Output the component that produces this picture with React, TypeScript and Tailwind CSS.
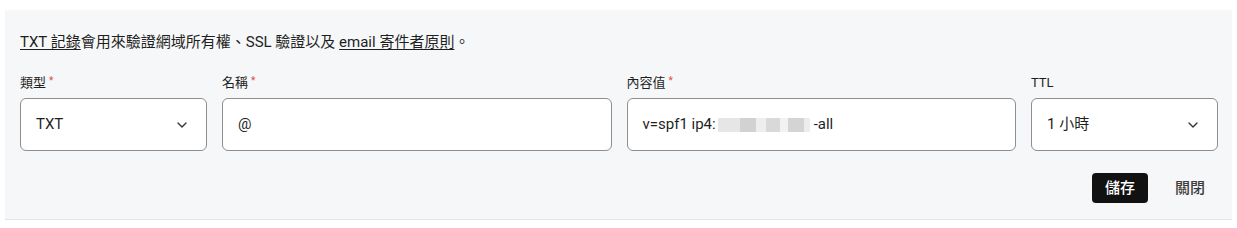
import { ChevronDown } from "lucide-react"

const font = { fontFamily: 'Roboto, "Noto Sans CJK TC", sans-serif' }

const Label = ({ text, required }: { text: string; required?: boolean }) => (
    <div className="h-[16px] mb-[8px] flex items-center text-[13px] text-[#1f1f1f] leading-none">
        {text}
        {required && <span className="ml-[3px] text-[#e0483e] text-[10px] -mt-[3px]">*</span>}
    </div>
)

const SelectBox = ({ value }: { value: string }) => (
    <div className="h-[53px] rounded-[6px] border border-[#8e8e8e] bg-white flex items-center justify-between pl-[15px] pr-[16px] text-[15px] text-[#1f1f1f]">
        <span>{value}</span>
        <ChevronDown className="w-[16px] h-[16px] text-[#333]" strokeWidth={2} />
    </div>
)

const InputBox = ({ children }: { children: React.ReactNode }) => (
    <div className="h-[53px] rounded-[6px] border border-[#8e8e8e] bg-white flex items-center px-[15px] text-[15px] text-[#1f1f1f]">
        {children}
    </div>
)

const App = () => {
    return (
        <div className="w-[1237px] h-[228px] bg-white pt-[10px] px-[5px]" style={font}>
            <div className="h-[210px] bg-[#f6f7f8] border-b border-[#e3e4e6] pl-[15px] pr-[14px] pt-[21px]">
                <p className="text-[15px] text-[#1f1f1f] leading-[22px]">
                    <span className="underline underline-offset-2">TXT 記錄</span>
                    會用來驗證網域所有權、SSL 驗證以及{" "}
                    <span className="underline underline-offset-2">email 寄件者原則</span>。
                </p>

                <div className="mt-[21px] grid grid-cols-[187px_1fr_1fr_187px] gap-[15px]">
                    <div>
                        <Label text="類型" required />
                        <SelectBox value="TXT" />
                    </div>
                    <div>
                        <Label text="名稱" required />
                        <InputBox>@</InputBox>
                    </div>
                    <div>
                        <Label text="內容值" required />
                        <InputBox>
                            <span>v=spf1 ip4:</span>
                            <span className="flex items-center h-[14px] ml-[2px]">
                                <span className="w-[22px] h-[14px] bg-[#e6e6e6]" />
                                <span className="w-[16px] h-[14px] bg-[#d2d2d2]" />
                                <span className="w-[10px] h-[14px] bg-[#eeeeee]" />
                                <span className="w-[14px] h-[14px] bg-[#d9d9d9]" />
                                <span className="w-[8px] h-[14px] bg-[#f2f2f2]" />
                                <span className="w-[16px] h-[14px] bg-[#d4d4d4]" />
                                <span className="w-[6px] h-[14px] bg-[#ececec]" />
                            </span>
                            <span className="ml-[4px]">-all</span>
                        </InputBox>
                    </div>
                    <div>
                        <Label text="TTL" />
                        <SelectBox value="1 小時" />
                    </div>
                </div>

                <div className="mt-[22px] flex justify-end items-center gap-[27px] pr-[13px]">
                    <button className="h-[30px] px-[13px] rounded-[4px] bg-[#111111] text-white text-[15px] font-medium">
                        儲存
                    </button>
                    <button className="h-[30px] text-[#3c3c3c] text-[15px] font-medium">
                        關閉
                    </button>
                </div>
            </div>
        </div>
    )
}

export default App
